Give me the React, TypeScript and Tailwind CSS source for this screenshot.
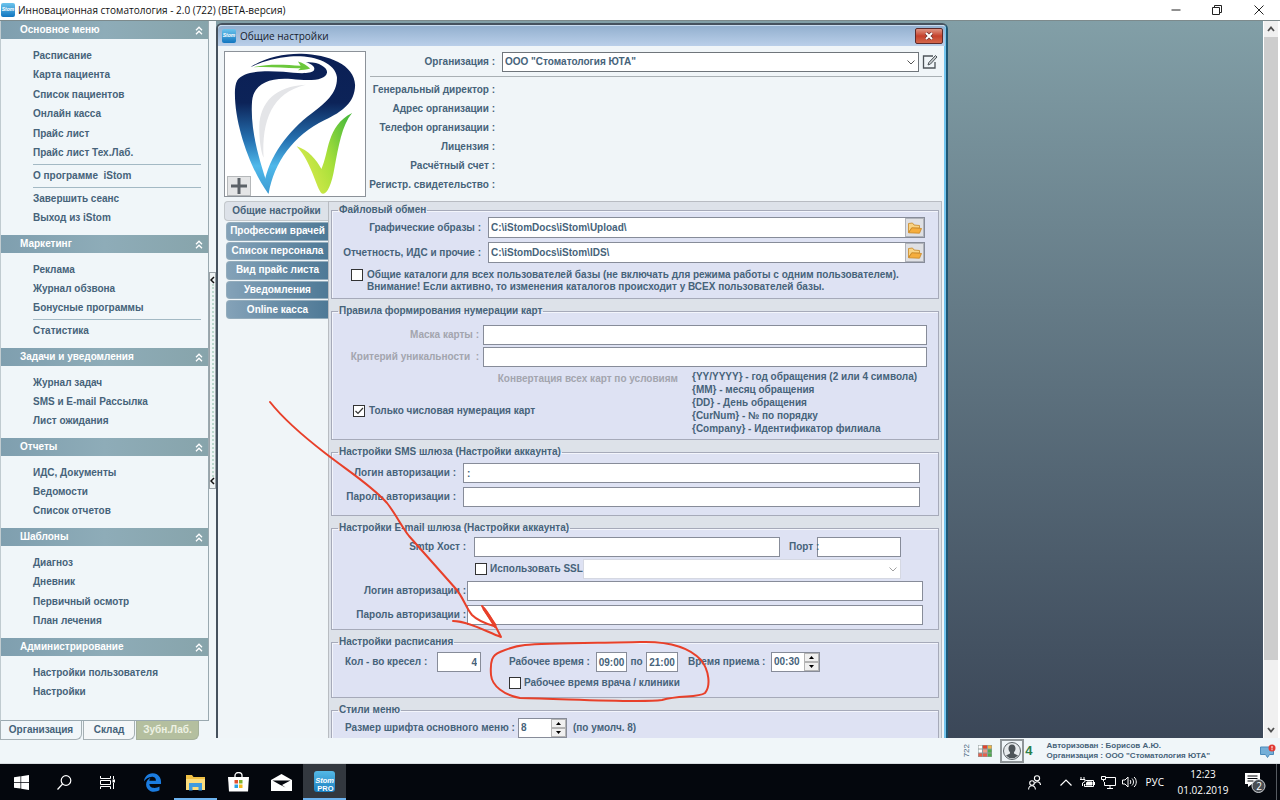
import React from "react";
import { FaEdgeLegacy } from "react-icons/fa6";

type Section = { title: string; groups: string[][] };

const SECTIONS: Section[] = [
  {
    title: "Основное меню",
    groups: [
      ["Расписание", "Карта пациента", "Список пациентов", "Онлайн касса", "Прайс лист", "Прайс лист Тех.Лаб."],
      ["О программе\u00a0 iStom"],
      ["Завершить сеанс", "Выход из iStom"],
    ],
  },
  { title: "Маркетинг", groups: [["Реклама", "Журнал обзвона", "Бонусные программы"], ["Статистика"]] },
  { title: "Задачи и уведомления", groups: [["Журнал задач", "SMS и E-mail Рассылка", "Лист ожидания"]] },
  { title: "Отчеты", groups: [["ИДС, Документы", "Ведомости", "Список отчетов"]] },
  { title: "Шаблоны", groups: [["Диагноз", "Дневник", "Первичный осмотр", "План лечения"]] },
  { title: "Администрирование", groups: [["Настройки пользователя", "Настройки"]] },
];

const GROUP_HEIGHT: Record<number, string> = {
  1: "h-[20px]",
  2: "h-[39px]",
  3: "h-[58px]",
  4: "h-[78px]",
  6: "h-[117px]",
};

const ORG_FIELDS = [
  "Генеральный директор :",
  "Адрес организации :",
  "Телефон организации :",
  "Лицензия :",
  "Расчётный счет :",
  "Регистр. свидетельство :",
];

const TABS = ["Профессии врачей", "Список персонала", "Вид прайс листа", "Уведомления", "Online касса"];

const MASKS = [
  "{YY/YYYY} - год обращения (2 или 4 символа)",
  "{MM} - месяц обращения",
  "{DD} - День обращения",
  "{CurNum} - № по порядку",
  "{Company} - Идентификатор филиала",
];

function AppIcon() {
  return (
    <svg viewBox="0 0 14 14" className="size-[14px] shrink-0" aria-hidden="true">
      <defs>
        <linearGradient id="appIcon" x1="0" y1="0" x2="0" y2="1">
          <stop offset="0" stopColor="#6cc4ec" />
          <stop offset="1" stopColor="#1176c0" />
        </linearGradient>
      </defs>
      <rect width="14" height="14" rx="2" fill="url(#appIcon)" />
      <text x="7" y="8" fontSize="5" fontStyle="italic" fontWeight="700" textAnchor="middle" fill="#fff">
        Stom
      </text>
    </svg>
  );
}

function TitleBar() {
  return (
    <header className="flex h-[21px] shrink-0 items-center border-b border-[#7d8a8c] bg-white pl-px text-[#111]">
      <AppIcon />
      <h1 className="ml-[3px] flex-1 font-['Open_Sans','Noto_Sans',sans-serif] text-[10px] leading-[20px] font-normal">
        Инновационная стоматология - 2.0 (722) (BETA-версия)
      </h1>
      <div className="flex h-full items-center">
        <button aria-label="Свернуть" className="flex h-full w-[41px] items-center justify-center">
          <svg viewBox="0 0 10 10" className="size-[10px]" stroke="#222"><path d="M0.5 5H9.5" /></svg>
        </button>
        <button aria-label="Развернуть" className="flex h-full w-[41px] items-center justify-center">
          <svg viewBox="0 0 10 10" className="size-[10px]" fill="none" stroke="#222">
            <path d="M0.5 2.5h7v7h-7zM2.5 2.5v-2h7v7h-2" />
          </svg>
        </button>
        <button aria-label="Закрыть" className="flex h-full w-[43px] items-center justify-center">
          <svg viewBox="0 0 10 10" className="size-[10px]" fill="none" stroke="#222"><path d="M0.5 0.5l9 9M9.5 0.5l-9 9" /></svg>
        </button>
      </div>
    </header>
  );
}

function Sidebar() {
  return (
    <nav className="flex w-[209px] shrink-0 flex-col">
      <div className="min-h-0 flex-1 overflow-hidden border-r border-b border-l border-[#9aa9b0] border-l-[#c0cbd0] bg-[#f0f6f9]">
        {SECTIONS.map((s) => (
          <section key={s.title}>
            <button className="flex h-[18px] w-full items-center justify-between bg-linear-to-r from-[#7f9faf] via-[#8eacb8] to-[#87a4ab] pr-[5px] pl-[19px] text-white">
              <span>{s.title}</span>
              <svg viewBox="0 0 8 9" className="h-[9px] w-[8px]" fill="none" stroke="#fff" strokeWidth="1.3">
                <path d="M1 4.2L4 1.2L7 4.2M1 8.2L4 5.2L7 8.2" />
              </svg>
            </button>
            <div className="py-[7px] pr-[7px] pl-8">
              {s.groups.map((g, i) => (
                <React.Fragment key={g[0]}>
                  {i > 0 && <hr className="my-px border-[#a3b9c4]" />}
                  <ul className={`grid auto-rows-fr ${GROUP_HEIGHT[g.length]}`}>
                    {g.map((item) => (
                      <li key={item} className="flex items-center">
                        <a href="#" className="whitespace-nowrap">{item}</a>
                      </li>
                    ))}
                  </ul>
                </React.Fragment>
              ))}
            </div>
          </section>
        ))}
      </div>
      <div className="flex h-[19px] shrink-0 gap-px">
        <button className="w-[82px] rounded-br-md border-r border-b border-l border-[#a5b0b4] bg-[#f0f6f9]">Организация</button>
        <button className="w-[52px] rounded-br-md border border-t-0 border-[#a5b0b4] bg-[#f4f7f8]">Склад</button>
        <button className="w-[63px] rounded-br-md border border-t-0 border-[#a5b09a] bg-[#b4bf9f] text-[#eef2e4]">Зубн.Лаб.</button>
      </div>
    </nav>
  );
}

function Splitter() {
  return (
    <div className="flex w-[7px] shrink-0 flex-col pt-[251px]">
      <button
        aria-label="Скрыть меню"
        className="flex h-[217px] flex-col items-center justify-between border border-[#9aa3a8] bg-[#eef3f4] py-[3px]"
      >
        <svg viewBox="0 0 5 8" className="h-[8px] w-[5px]" fill="none" stroke="#111" strokeWidth="1.5"><path d="M4 1L1 4L4 7" /></svg>
        <span className="w-0 flex-1 border-l-2 border-dotted border-[#bcd8cc]" />
        <svg viewBox="0 0 5 8" className="h-[8px] w-[5px]" fill="none" stroke="#111" strokeWidth="1.5"><path d="M4 1L1 4L4 7" /></svg>
      </button>
    </div>
  );
}

function ToothLogo() {
  return (
    <svg viewBox="43 92 424 436" className="h-full w-full" preserveAspectRatio="none" role="img" aria-label="Логотип">
      <defs>
        <linearGradient id="navy" x1="0" y1="97" x2="0" y2="522" gradientUnits="userSpaceOnUse">
          <stop offset="0" stopColor="#0b1f55" />
          <stop offset="0.35" stopColor="#0c2358" />
          <stop offset="0.62" stopColor="#2673b3" />
          <stop offset="0.8" stopColor="#4fb8ea" />
          <stop offset="1" stopColor="#3d9bd2" />
        </linearGradient>
        <linearGradient id="lime" x1="262" y1="400" x2="428" y2="330" gradientUnits="userSpaceOnUse">
          <stop offset="0" stopColor="#d2e84a" />
          <stop offset="0.45" stopColor="#a8e03a" />
          <stop offset="1" stopColor="#4dbb3c" />
        </linearGradient>
      </defs>
      <path fill="#e4e5e8" d="M288 191C195 195 150 245 147 315C146 355 152 395 160 412C154 300 185 215 288 191Z" />
      <path
        fill="url(#navy)"
        d="M80 178C100 148 165 148 220 152C260 156 300 160 312 148C318 138 306 128 288 123C325 120 354 138 352 154C348 178 305 180 245 174C175 168 130 190 125 240C118 330 150 430 174 500L174 521C125 455 72 320 73 215C73 200 75 188 80 178Z"
      />
      <path
        fill="url(#navy)"
        d="M120 138C165 108 220 96 275 97C355 99 436 130 437 192C436 245 400 272 345 298C250 345 192 425 175 522L162 490C175 410 235 330 305 278C350 244 384 215 382 168C376 122 305 100 240 106C195 110 155 122 120 138Z"
      />
      <path fill="#6cc83c" d="M124 139C175 127 225 131 272 134L264 121C280 125 292 134 301 142C290 146 278 146 264 147L272 141C225 142 175 135 124 139Z" />
      <path
        fill="url(#lime)"
        d="M260 377C295 388 320 418 335 446C358 400 350 315 428 277C396 315 387 380 375 440C366 495 352 522 340 521C322 520 310 430 260 377Z"
      />
    </svg>
  );
}

const FIELD = "h-[20px] min-w-0 border border-[#878c99] bg-white px-[3px] outline-none";
const TIME_FIELD = "h-[20px] min-w-0 border border-[#878c99] bg-white text-center outline-none";

function Group({ title, className, children }: { title: string; className: string; children: React.ReactNode }) {
  return (
    <fieldset className={`min-w-0 shrink-0 border border-[#a6aab9] bg-[#dee2f3] shadow-[inset_1px_1px_0_#f3f5fc] ${className}`}>
      <legend className="ml-[6px] h-[14px] px-px leading-[14px]">{title}</legend>
      {children}
    </fieldset>
  );
}

function Check({ id, checked = false }: { id: string; checked?: boolean }) {
  return (
    <span className="relative flex size-[12px] shrink-0">
      <input id={id} type="checkbox" defaultChecked={checked} className="peer size-[12px] appearance-none border border-[#333] bg-white" />
      <svg viewBox="0 0 12 12" className="pointer-events-none absolute inset-0 hidden peer-checked:block" fill="none" stroke="#333" strokeWidth="1.2">
        <path d="M2.5 6L5 8.5L10 3" />
      </svg>
    </span>
  );
}

function Spinner({ id, value, className }: { id: string; value: string; className: string }) {
  return (
    <span className={`flex h-[20px] border border-[#878c99] bg-white ${className}`}>
      <input id={id} defaultValue={value} className="min-w-0 flex-1 pl-[2px] outline-none" />
      <span className="flex w-[15px] flex-col">
        <button aria-label="Больше" className="flex flex-1 items-center justify-center border border-[#b4b4b4] bg-[#f0f0f0]">
          <svg viewBox="0 0 5 3" className="h-[3px] w-[5px]"><path d="M0 3L2.5 0L5 3Z" fill="#000" /></svg>
        </button>
        <button aria-label="Меньше" className="flex flex-1 items-center justify-center border border-[#b4b4b4] bg-[#f0f0f0]">
          <svg viewBox="0 0 5 3" className="h-[3px] w-[5px]"><path d="M0 0L2.5 3L5 0Z" fill="#000" /></svg>
        </button>
      </span>
    </span>
  );
}

function PathRow({ id, label, value }: { id: string; label: string; value: string }) {
  return (
    <div className="flex h-[21px] items-center">
      <label htmlFor={id} className="w-[149px] shrink-0 text-right whitespace-nowrap">{label}</label>
      <div className="ml-[7px] flex h-full flex-1 border border-[#878c99] bg-white">
        <input id={id} defaultValue={value} className="min-w-0 flex-1 px-[2px] outline-none" />
        <button aria-label="Выбрать папку" className="flex w-[19px] items-center justify-center border border-[#b0b3ba] bg-[#dfe0e4]">
          <svg viewBox="0 0 14 12" className="h-[12px] w-[14px]" stroke="#c98723" strokeWidth="0.8">
            <path d="M0.5 10.5V1.5L4.5 1L6 3L11.5 3.5V6L3.5 6.2Z" fill="#f9d384" />
            <path d="M0.7 10.8L3.8 5.8L13.5 6.5L11.5 11.2Z" fill="#f5ad3d" />
          </svg>
        </button>
      </div>
    </div>
  );
}

function SettingsPanel() {
  return (
    <div className="flex min-w-0 flex-1 flex-col gap-[5px] overflow-hidden border-t border-r border-l border-[#b8bcc2] bg-[#dde2e9] px-[2px] pt-px">
      <Group title="Файловый обмен" className="pr-[13px] pb-[5px]">
        <div className="flex flex-col gap-[4px]">
          <PathRow id="graphics" label="Графические образы :" value="C:\iStomDocs\iStom\Upload\" />
          <PathRow id="reports" label="Отчетность, ИДС и прочие :" value="C:\iStomDocs\iStom\IDS\" />
        </div>
        <div className="mt-[6px] ml-[19px] flex items-start gap-[4px]">
          <Check id="shared" />
          <label htmlFor="shared" className="whitespace-nowrap">
            Общие каталоги для всех пользователей базы (не включать для режима работы с одним пользователем).
            <br />
            Внимание! Если активно, то изменения каталогов происходит у ВСЕХ пользователей базы.
          </label>
        </div>
      </Group>

      <Group title="Правила формирования нумерации карт" className="pt-[7px] pr-[11px] pb-[4px]">
        <div className="flex flex-col gap-[2px]">
          <div className="flex items-center text-[#a3a5ae]">
            <label htmlFor="mask" className="w-[147px] shrink-0 text-right">Маска карты :</label>
            <input id="mask" className={`${FIELD} ml-[4px] flex-1`} />
          </div>
          <div className="flex items-center text-[#a3a5ae]">
            <label htmlFor="unique" className="w-[147px] shrink-0 text-right">Критерий уникальности &nbsp;:</label>
            <input id="unique" className={`${FIELD} ml-[4px] flex-1`} />
          </div>
        </div>
        <div className="flex pt-[3px]">
          <div className="flex w-[360px] shrink-0 flex-col pl-[21px]">
            <span className="pt-[3px] pr-[14px] text-right text-[#a3a5ae]">Конвертация всех карт по условиям</span>
            <div className="mt-[20px] flex items-center gap-[4px]">
              <Check id="numeric" checked />
              <label htmlFor="numeric">Только числовая нумерация карт</label>
            </div>
          </div>
          <ul className="leading-[13px] whitespace-nowrap">
            {MASKS.map((m) => (
              <li key={m}>{m}</li>
            ))}
          </ul>
        </div>
      </Group>

      <Group title="Настройки SMS шлюза (Настройки аккаунта)" className="pt-[4px] pr-[18px] pb-[8px]">
        <div className="flex flex-col gap-[4px]">
          <div className="flex items-center">
            <label htmlFor="smsLogin" className="w-[124px] shrink-0 text-right">Логин авторизации :</label>
            <input id="smsLogin" defaultValue=":" className={`${FIELD} ml-[7px] flex-1`} />
          </div>
          <div className="flex items-center">
            <label htmlFor="smsPass" className="w-[124px] shrink-0 text-right">Пароль авторизации :</label>
            <input id="smsPass" className={`${FIELD} ml-[7px] flex-1`} />
          </div>
        </div>
      </Group>

      <Group title="Настройки E-mail шлюза (Настройки аккаунта)" className="pt-[2px] pr-[15px] pb-[4px]">
        <div className="flex items-center pr-[22px]">
          <label htmlFor="smtp" className="w-[134px] shrink-0 text-right">Smtp Хост :</label>
          <input id="smtp" className={`${FIELD} ml-[8px] flex-1`} />
          <label htmlFor="port" className="z-10 ml-[9px] w-[28px] whitespace-nowrap">Порт :</label>
          <input id="port" className={`${FIELD} w-[84px]`} />
        </div>
        <div className="mt-[2px] flex h-[20px] items-center pr-[22px] pl-[143px]">
          <Check id="ssl" />
          <label htmlFor="ssl" className="ml-[3px] whitespace-nowrap">Использовать SSL</label>
          <span className="relative flex flex-1">
            <select aria-label="Версия SSL" disabled className="h-[20px] w-full appearance-none border border-[#d5d8e2] bg-white">
              <option></option>
            </select>
            <svg viewBox="0 0 8 5" className="pointer-events-none absolute top-[8px] right-[4px] h-[5px] w-[8px]" fill="none" stroke="#a0a0a0"><path d="M0.5 0.5L4 4L7.5 0.5" /></svg>
          </span>
        </div>
        <div className="mt-[2px] flex flex-col gap-[4px]">
          <div className="flex items-center">
            <label htmlFor="mailLogin" className="w-[134px] shrink-0 text-right">Логин авторизации :</label>
            <input id="mailLogin" className={`${FIELD} ml-px flex-1`} />
          </div>
          <div className="flex items-center">
            <label htmlFor="mailPass" className="w-[134px] shrink-0 text-right">Пароль авторизации :</label>
            <input id="mailPass" className={`${FIELD} ml-px flex-1`} />
          </div>
        </div>
      </Group>

      <Group title="Настройки расписания" className="pt-[3px] pb-[8px]">
        <div className="flex items-center whitespace-nowrap">
          <label htmlFor="chairs" className="ml-[13px] w-[92px]">Кол - во кресел :</label>
          <input id="chairs" defaultValue="4" className={`${FIELD} w-[44px] text-right`} />
          <label htmlFor="from" className="ml-[28px] w-[87px]">Рабочее время :</label>
          <input id="from" defaultValue="09:00" className={`${TIME_FIELD} w-[31px]`} />
          <label htmlFor="to" className="w-[19px] text-center">по</label>
          <input id="to" defaultValue="21:00" className={`${TIME_FIELD} w-[32px]`} />
          <label htmlFor="visit" className="ml-[10px] w-[83px]">Время приема :</label>
          <Spinner id="visit" value="00:30" className="w-[49px]" />
        </div>
        <div className="mt-[5px] flex items-center gap-[3px] pl-[177px]">
          <Check id="doctorTime" />
          <label htmlFor="doctorTime">Рабочее время врача / клиники</label>
        </div>
      </Group>

      <Group title="Стили меню" className="pt-px pb-[8px]">
        <div className="flex items-center pl-[13px] whitespace-nowrap">
          <label htmlFor="fontSize" className="w-[173px]">Размер шрифта основного меню :</label>
          <Spinner id="fontSize" value="8" className="w-[49px]" />
          <span className="ml-[6px]">(по умолч. 8)</span>
        </div>
      </Group>
    </div>
  );
}

function SettingsDialog() {
  return (
    <section className="mt-[2px] flex w-[732px] shrink-0 flex-col rounded-t-md border-2 border-b-0 border-[#46525e] border-r-[#1f5673] bg-[#f0f5f8]">
      <div className="flex h-[21px] shrink-0 items-center rounded-t-sm border-t border-r border-[#c9dcf0] border-r-[#73c5ee] bg-linear-to-b from-[#93b0cf] to-[#bacfe9] pr-[2px] pl-[4px]">
        <AppIcon />
        <h2 className="ml-[4px] flex-1 font-['Open_Sans','Noto_Sans',sans-serif] text-[10px] font-normal text-[#16202c]">Общие настройки</h2>
        <button aria-label="Закрыть окно" className="flex h-[16px] w-[28px] items-center justify-center rounded-xs border border-[#5d2a2a] bg-linear-to-b from-[#dd9383] via-[#c5402c] to-[#d3664a]">
          <svg viewBox="0 0 10 8" className="h-[8px] w-[10px]" fill="none">
            <path d="M2 1L8 7M8 1L2 7" stroke="#6b3030" strokeWidth="3.4" />
            <path d="M2 1L8 7M8 1L2 7" stroke="#fff" strokeWidth="2" />
          </svg>
        </button>
      </div>
      <div className="flex min-h-0 flex-1 flex-col border-r-2 border-[#73c5ee] pr-[2px] pl-[6px]">
        <div className="flex shrink-0 pt-[5px]">
          <div className="relative h-[146px] w-[142px] shrink-0 border border-[#8c9299] bg-white">
            <ToothLogo />
            <button aria-label="Добавить логотип" className="absolute bottom-0 left-[2px] flex h-[20px] w-[24px] items-center justify-center border border-[#b5b8ba] bg-[#e4e5e6]">
              <svg viewBox="0 0 16 16" className="size-[16px]"><path d="M6.5 0h3v6.5H16v3H9.5V16h-3V9.5H0v-3h6.500Z" fill="#5c6268" /></svg>
            </button>
          </div>
          <div className="ml-[4px] flex min-w-0 flex-1 flex-col">
            <div className="flex h-[26px] items-center border-b border-[#a9b0b4] pb-[3px]">
              <label htmlFor="org" className="w-[125px] shrink-0 text-right">Организация :</label>
              <span className="relative ml-[7px] flex flex-1">
                <select id="org" className="h-[20px] w-full appearance-none border border-[#6f757b] bg-white pl-[2px]">
                  <option>ООО "Стоматология ЮТА"</option>
                </select>
                <svg viewBox="0 0 8 5" className="pointer-events-none absolute top-[8px] right-[4px] h-[5px] w-[8px]" fill="none" stroke="#555"><path d="M0.5 0.5L4 4L7.5 0.5" /></svg>
              </span>
              <button aria-label="Изменить" className="mr-[4px] ml-[3px]">
                <svg viewBox="0 0 16 16" className="size-[16px]" fill="none" stroke="#4d5459" strokeWidth="1.300">
                  <path d="M11 2H1.500V14H13V8" />
                  <path d="M6 11L6.800 8.500L13.500 1.500L15 3L8.500 10Z" fill="#c5cacd" strokeWidth="1" />
                </svg>
              </button>
            </div>
            <dl className="w-[125px] pt-[3px] text-right">
              {ORG_FIELDS.map((f) => (
                <dt key={f} className="flex h-[19px] items-center justify-end whitespace-nowrap">{f}</dt>
              ))}
            </dl>
          </div>
        </div>
        <div className="mt-[4px] flex min-h-0 flex-1">
          <div role="tablist" className="flex w-[104px] shrink-0 flex-col">
            <button role="tab" aria-selected="true" className="h-[20px] shrink-0 rounded-l-sm border border-r-0 border-[#c3c8cc] bg-[#dde2e9] whitespace-nowrap">Общие настройки</button>
            <div className="grid h-[98px] auto-rows-fr">
              {TABS.map((t) => (
                <button key={t} role="tab" aria-selected="false" className="mt-px ml-[2px] rounded-l-sm border border-r-0 border-[#93acbc] bg-linear-to-r from-[#84a2b8] to-[#4e7996] whitespace-nowrap text-white">
                  {t}
                </button>
              ))}
            </div>
          </div>
          <SettingsPanel />
        </div>
      </div>
    </section>
  );
}

function PageScroll() {
  return (
    <div className="flex w-[17px] shrink-0 flex-col border-r-2 border-l border-white bg-[#f0f0f0]">
      <button aria-label="Вверх" className="flex h-[16px] shrink-0 items-center justify-center">
        <svg viewBox="0 0 8 6" className="h-[6px] w-[8px]" fill="none" stroke="#505050" strokeWidth="1.8"><path d="M1 5L4 1.500L7 5" /></svg>
      </button>
      <div className="min-h-0 flex-1 pb-[62px]">
        <div className="h-full bg-[#cdcdcd]" />
      </div>
      <button aria-label="Вниз" className="flex h-[16px] shrink-0 items-center justify-center">
        <svg viewBox="0 0 8 6" className="h-[6px] w-[8px]" fill="none" stroke="#505050" strokeWidth="1.8"><path d="M1 1L4 4.500L7 1" /></svg>
      </button>
    </div>
  );
}

function StatusBar() {
  return (
    <footer className="flex h-[26px] shrink-0 items-center justify-end border-b border-[#d8dde0] bg-[#f0f6f9] pr-[4px] text-[8px] leading-[10px]">
      <span className="rotate-180 font-normal [writing-mode:vertical-rl]">722</span>
      <svg viewBox="0 0 14 12" className="ml-[6px] h-[12px] w-[14px]">
        <rect width="14" height="12" fill="#8f9b9b" />
        <path d="M0.500 0.500h3.500v3h-3.500zM0.500 4.500h3.500v3h-3.500z" fill="#fff" />
        <path d="M0.500 8.500h3.500v3h-3.500zM5 8.500h4v3h-4z" fill="#e8604c" />
        <path d="M5 0.500h4v3h-4z" fill="#e4442e" />
        <path d="M5 4.500h4v3h-4z" fill="#f09a86" />
        <path d="M10 0.500h3.500v3h-3.500z" fill="#f3b544" />
        <path d="M10 4.500h3.500v3h-3.500zM10 8.500h3.500v3h-3.500z" fill="#4faa4c" />
      </svg>
      <span className="ml-[8px] flex size-[24px] items-center justify-center border-2 border-[#8f9598]">
        <svg viewBox="0 0 20 20" className="size-[20px]">
          <circle cx="10" cy="10" r="8.500" fill="#e7ebed" stroke="#5c6367" strokeWidth="1" />
          <path d="M10 3.500c2.500 0 3.500 1.700 3.500 4c0 1.700-.8 3-1.500 3.800v1.200l4 2A8 8 0 0 1 4 14.500l4-2v-1.200C7.300 10.500 6.500 9.200 6.500 7.500c0-2.300 1-4 3.500-4Z" fill="#4f565a" />
        </svg>
      </span>
      <span className="ml-px text-[13px] text-[#2b8049]">4</span>
      <div className="ml-[14px] whitespace-nowrap">
        <p>Авторизован : Борисов А.Ю.</p>
        <p>Организация : ООО "Стоматология ЮТА"</p>
      </div>
      <svg viewBox="0 0 16 14" className="ml-[50px] h-[14px] w-[16px]">
        <path d="M0.500 3h13v7.500h-4L7.500 13.500L5.500 10.500h-5Z" fill="#74afd8" stroke="#4c8bba" />
        <circle cx="12" cy="4" r="3.500" fill="#e13a33" />
        <path d="M12 2v2.500M12 5.200v1" stroke="#fff" />
      </svg>
    </footer>
  );
}

const TASK = "flex h-full w-[43px] items-center justify-center";

function Taskbar() {
  return (
    <footer className="flex h-[36px] shrink-0 items-center bg-[#04070d] text-white">
      <button aria-label="Пуск" className={TASK}>
        <svg viewBox="0 0 15 15" className="size-[15px]"><path d="M0 2.200L6.500 1.300V7H0zM7.200 1.200L15 0V7H7.200zM0 7.700h6.500v5.900L0 12.700zM7.200 7.700H15V15l-7.800-1.200z" fill="#fff" /></svg>
      </button>
      <button aria-label="Поиск" className={TASK}>
        <svg viewBox="0 0 15 15" className="size-[15px]" fill="none" stroke="#fff" strokeWidth="1.200"><circle cx="9" cy="5.500" r="4.800" /><path d="M5.600 9L0.500 14.500" /></svg>
      </button>
      <button aria-label="Представление задач" className={TASK}>
        <svg viewBox="0 0 15 15" className="size-[15px]" fill="none" stroke="#fff"><path d="M0.500 1v2.500h10V1M0.500 5.500h10v4h-10zM0.500 14v-2.500h10V14M13.500 1v3M13.500 8v6" /><rect x="13" y="5" width="1.500" height="2" fill="#fff" /></svg>
      </button>
      <button aria-label="Edge" className={`${TASK} ml-[2px]`}>
        <FaEdgeLegacy className="size-[19px] text-[#1b7ce0]" />
      </button>
      <button aria-label="Проводник" className={`${TASK} border-b-2 border-[#6cb2ee] pt-[2px]`}>
        <svg viewBox="0 0 19 17" className="h-[17px] w-[19px]"><path d="M0 1h6l1.500 2H19v13H0z" fill="#f0c044" /><path d="M0 5h19v11H0z" fill="#fbdc7c" /><path d="M3 9h13v7.500h-3.500V13h-6v3.500H3z" fill="#3e9ade" /></svg>
      </button>
      <button aria-label="Магазин" className={TASK}>
        <svg viewBox="0 0 21 20" className="h-[20px] w-[21px]"><path d="M7 5V3.500a3.500 3 0 0 1 7 0V5" fill="none" stroke="#fff" strokeWidth="1.300" /><path d="M0 5h21l-1 14.500H1z" fill="#fff" /><path d="M6.500 8h3.500v3.500H6.500z" fill="#e2512c" /><path d="M11 8h3.500v3.500H11z" fill="#7eb52e" /><path d="M6.500 12.500H10V16H6.500z" fill="#2aa2e4" /><path d="M11 12.500h3.500V16H11z" fill="#f4b91e" /></svg>
      </button>
      <button aria-label="Почта" className={TASK}>
        <svg viewBox="0 0 21 17" className="h-[17px] w-[21px]"><path d="M0 6L10.500 0L21 6V17H0Z" fill="#fff" /><path d="M1.500 6.500H19.500L11 11L14.500 13.500L8.500 10.500Z" fill="#04070d" /></svg>
      </button>
      <button aria-label="iStom PRO" className={`${TASK} border-b-2 border-[#6cb2ee] bg-[#33383f]`}>
        <svg viewBox="0 0 21 21" className="size-[21px]">
          <defs><linearGradient id="pro" x1="0" y1="0" x2="0" y2="1"><stop offset="0" stopColor="#55b9e6" /><stop offset="1" stopColor="#1a7fc0" /></linearGradient></defs>
          <rect width="21" height="21" rx="3" fill="url(#pro)" />
          <text x="10.500" y="12" fontSize="7.500" fontWeight="700" fontStyle="italic" textAnchor="middle" fill="#fff">Stom</text>
          <text x="11.500" y="19.500" fontSize="7.500" fontWeight="700" textAnchor="middle" fill="#fff">PRO</text>
        </svg>
      </button>
      <div className="ml-auto flex h-full items-center font-['Open_Sans','Noto_Sans',sans-serif] text-[10px] font-normal">
        <button aria-label="Люди" className="mr-[19px]">
          <svg viewBox="0 0 13 15" className="h-[15px] w-[13px]" fill="none" stroke="#fff" strokeWidth="1.100"><circle cx="9" cy="3.300" r="2.600" /><path d="M6.500 8.300C9 5.500 12.500 7 12.500 10" /><circle cx="4" cy="8" r="2.300" /><path d="M0.600 14.500C0.600 9.500 7.400 9.500 7.400 14.500" /></svg>
        </button>
        <button aria-label="Скрытые значки" className="mr-[8px]">
          <svg viewBox="0 0 12 7" className="h-[7px] w-[12px]" fill="none" stroke="#fff" strokeWidth="1.200"><path d="M0.500 6.500L6 1L11.500 6.500" /></svg>
        </button>
        <svg viewBox="0 0 15 11" className="mr-[6px] h-[11px] w-[15px]" fill="none" stroke="#fff"><path d="M5.500 3.500H13.500V9.500H4.500V7M14.500 5v3M1 0v2.500M4 0v2.500M0 2.500h5v2L2.500 6V9" /><path d="M7 5h5v3H6z" fill="#fff" /></svg>
        <svg viewBox="0 0 15 13" className="mr-[6px] h-[13px] w-[15px]" fill="none" stroke="#fff"><path d="M5 1.500H14.500V9.500H3.500V6M9 9.500V12M6 12.500H12M0.500 0.500h4v3h-4zM2.500 3.500V5.500" /></svg>
        <svg viewBox="0 0 15 12" className="h-[12px] w-[15px]" fill="none" stroke="#fff"><path d="M0.500 4H3L6 1V11L3 8H0.500ZM8 4C9 5 9 7 8 8M10 2.500C12 4.500 12 7.500 10 9.500M12 1C15 3.500 15 8.500 12 11" /></svg>
        <span className="ml-[9px]">РУС</span>
        <time className="ml-[13px] w-[52px] text-center text-[10px] leading-[16px] whitespace-nowrap">
          12:23
          <br />
          01.02.2019
        </time>
        <button aria-label="Уведомления" className="relative mr-[10px] ml-[15px] h-[22px] w-[22px]">
          <svg viewBox="0 0 22 22" className="size-[22px]">
            <path d="M1 2h15v11H8l-4 3v-3H1z" fill="#fff" />
            <path d="M3.500 5h10M3.500 7.500h10M3.500 10h6" stroke="#04070d" />
            <circle cx="14.500" cy="15" r="6.500" fill="#4a4e54" stroke="#cfd2d5" />
          </svg>
          <span className="absolute right-[4px] bottom-0 text-[10px] leading-[14px]">2</span>
        </button>
        <span className="h-full border-l border-[#555a60] pr-[3px]" />
      </div>
    </footer>
  );
}

function Annotation() {
  return (
    <svg viewBox="0 0 1280 800" className="pointer-events-none absolute top-0 left-0 h-[800px] w-[1280px]" fill="none" stroke="#e8402a" strokeWidth="2" strokeLinecap="round" strokeLinejoin="round" aria-hidden="true">
      <path d="M270 402C285 421 303 436 325 453C348 471 371 485 387 503C395 513 402 527 409 536L456 589C463 597 466 608 472 615C478 621 487 624 494 626" />
      <path d="M453 621C468 621 487 632 501 637C496 627 490 614 482 606L495 627" />
      <path d="M484 609L495 625" strokeWidth="3" />
      <path d="M525 645C545 643 600 643 640 642C672 641 690 648 701 660C709 670 711 686 705 693C698 698 680 695 662 700C640 703 570 699 520 698C504 695 492 686 491 675C490 661 492 655 500 652C509 648 515 646 525 645Z" />
    </svg>
  );
}

export default function App() {
  return (
    <div className="relative flex h-screen flex-col overflow-hidden bg-[#f0f6f9] font-['Liberation_Sans',Arial,sans-serif] text-[10px] leading-[12px] font-bold text-[#46637a]">
      <TitleBar />
      <main className="flex min-h-0 flex-1">
        <div className="z-10 -mb-[2px] flex shrink-0">
          <Sidebar />
          <Splitter />
        </div>
        <div className="flex min-w-0 flex-1 bg-linear-to-b from-[#829fa7] to-[#3b4758]">
          <SettingsDialog />
        </div>
        <PageScroll />
      </main>
      <StatusBar />
      <Taskbar />
      <Annotation />
    </div>
  );
}
